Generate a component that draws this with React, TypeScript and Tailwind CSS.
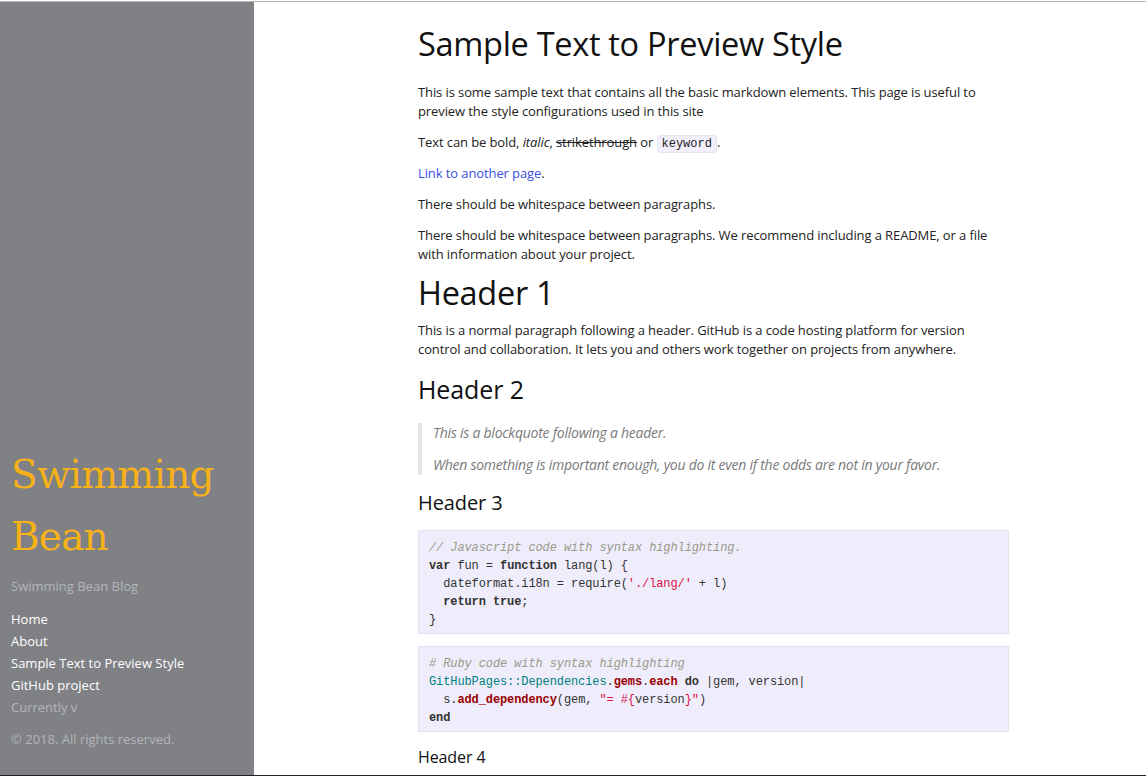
const body = "font-['Open_Sans',sans-serif]";
const mono = "font-['Liberation_Mono',monospace]";

function Sidebar() {
  return (
    <aside className={`w-[254px] shrink-0 bg-[#7f8185] flex flex-col justify-end px-[11px] pb-[26px] ${body}`}>
      <div className="font-['DejaVu_Serif',serif] text-[39px] leading-[62px] text-[#f8b117] tracking-[-0.8px]">
        Swimming
        <br />
        Bean
      </div>
      <p className="mt-[8px] text-[13px] leading-[20px] text-[#b4b5b8]">Swimming Bean Blog</p>
      <nav className="mt-[12px] flex flex-col text-[13px] leading-[22px] text-white">
        <a>Home</a>
        <a>About</a>
        <a>Sample Text to Preview Style</a>
        <a>GitHub project</a>
        <span className="text-[#b4b5b8]">Currently v</span>
      </nav>
      <p className="mt-[11px] text-[13px] leading-[20px] text-[#b4b5b8]">© 2018. All rights reserved.</p>
    </aside>
  );
}

function Code({ children }: { children: React.ReactNode }) {
  return (
    <pre className={`mb-[12px] border border-[#e4e2f0] bg-[#efedfc] px-[10px] pt-[8px] pb-[4px] text-[12px] leading-[18px] text-[#333] ${mono}`}>
      {children}
    </pre>
  );
}

export default function App() {
  return (
    <div className="w-[1146px] h-[776px] overflow-hidden bg-white flex flex-col">
      <div className="h-[2px] border-b border-[#b3b3b3] bg-white" />
      <div className="flex flex-1 min-h-0">
        <Sidebar />
        <main className={`ml-[164px] w-[591px] text-[13px] leading-[19px] tracking-[-0.1px] text-[#222] ${body}`}>
          <h1 className="mt-[21px] mb-[18px] text-[32.5px] leading-[42px] text-[#111] tracking-[-0.3px]">
            Sample Text to Preview Style
          </h1>
          <p className="mb-[12px] pr-[20px]">
            This is some sample text that contains all the basic markdown elements. This page is useful to preview the style
            configurations used in this site
          </p>
          <p className="mb-[12px]">
            Text can be bold, <em>italic</em>, <s>strikethrough</s> or{" "}
            <code
              className={`rounded-[3px] border border-[#e8e6f3] bg-[#f1effc] px-[4px] py-[1px] text-[12px] leading-[12px] tracking-normal ${mono}`}
            >
              keyword
            </code>
            .
          </p>
          <p className="mb-[12px]">
            <a className="text-[#3a4fe0]">Link to another page</a>.
          </p>
          <p className="mb-[12px]">There should be whitespace between paragraphs.</p>
          <p className="mb-[10px]">
            There should be whitespace between paragraphs. We recommend including a README, or a file with information about
            your project.
          </p>
          <h1 className="mb-[9px] text-[32.5px] leading-[38px] text-[#111] tracking-[-0.3px]">Header 1</h1>
          <p className="mb-[14px]">
            This is a normal paragraph following a header. GitHub is a code hosting platform for version control and
            collaboration. It lets you and others work together on projects from anywhere.
          </p>
          <h2 className="mb-[18px] text-[25px] leading-[32px] text-[#111]">Header 2</h2>
          <blockquote className="mb-[15px] border-l-[4px] border-[#e5e5e5] pl-[11px] italic text-[14px] leading-[20px] text-[#7a7a7a] tracking-[-0.25px]">
            <p className="mb-[12px]">This is a blockquote following a header.</p>
            <p>When something is important enough, you do it even if the odds are not in your favor.</p>
          </blockquote>
          <h3 className="mb-[14px] text-[20px] leading-[26px] text-[#111]">Header 3</h3>
          <Code>
            <span className="italic text-[#998]">// Javascript code with syntax highlighting.</span>
            {"\n"}
            <b>var</b> fun = <b>function</b> lang(l) {"{"}
            {"\n"}
            {"  "}dateformat.i18n = require(<span className="text-[#d14]">'./lang/'</span> + l)
            {"\n"}
            {"  "}
            <b>return true</b>;{"\n"}
            {"}"}
          </Code>
          <Code>
            <span className="italic text-[#998]"># Ruby code with syntax highlighting</span>
            {"\n"}
            <span className="text-[#008080]">GitHubPages::Dependencies</span>.
            <b className="text-[#900]">gems</b>.<b className="text-[#900]">each</b> <b>do</b> |gem, version|
            {"\n"}
            {"  "}s.<b className="text-[#900]">add_dependency</b>(gem, <span className="text-[#d14]">"= #{"{"}</span>
            version<span className="text-[#d14]">{"}"}"</span>){"\n"}
            <b>end</b>
          </Code>
          <h4 className="mt-[14px] text-[16px] leading-[22px] text-[#111]">Header 4</h4>
        </main>
      </div>
      <div className="h-[1px] bg-[#222]" />
    </div>
  );
}
